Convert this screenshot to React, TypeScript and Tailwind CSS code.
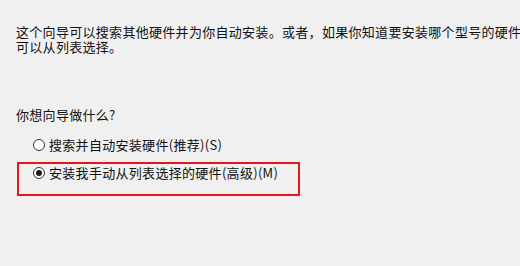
import React from 'react';

function Radio({ checked }: { checked?: boolean }) {
  return (
    <span className="flex h-[12px] w-[12px] flex-shrink-0 items-center justify-center rounded-full border border-[#333333] bg-white">
      {checked && <span className="h-[6px] w-[6px] rounded-full bg-[#1a1a1a]" />}
    </span>
  );
}

export default function App() {
  return (
    <div
      className="h-[266px] w-[520px] overflow-hidden bg-[#f0f0f0] text-[13px] tracking-[0.3px] text-[#111111]"
      style={{ fontFamily: '"Microsoft YaHei", "Noto Sans CJK SC", sans-serif' }}
    >
      <div className="pl-4 pt-[24px]">
        <p className="whitespace-nowrap leading-[15px]">
          这个向导可以搜索其他硬件并为你自动安装。或者，如果你知道要安装哪个型号的硬件，你
          <br />
          可以从列表选择。
        </p>

        <p className="mt-[53px] leading-[15px]">你想向导做什么?</p>

        <div className="mt-[14px] flex items-center gap-[4px] pl-[17px] leading-[17px]">
          <Radio />
          <span>搜索并自动安装硬件(推荐)(S)</span>
        </div>
      </div>

      <div className="ml-[17px] mt-[9px] h-[34px] w-[283px] border-2 border-[#e8141c] pl-[14px]">
        <div className="flex items-center gap-[4px] leading-[17px]">
          <Radio checked />
          <span>安装我手动从列表选择的硬件(高级)(M)</span>
        </div>
      </div>
    </div>
  );
}
